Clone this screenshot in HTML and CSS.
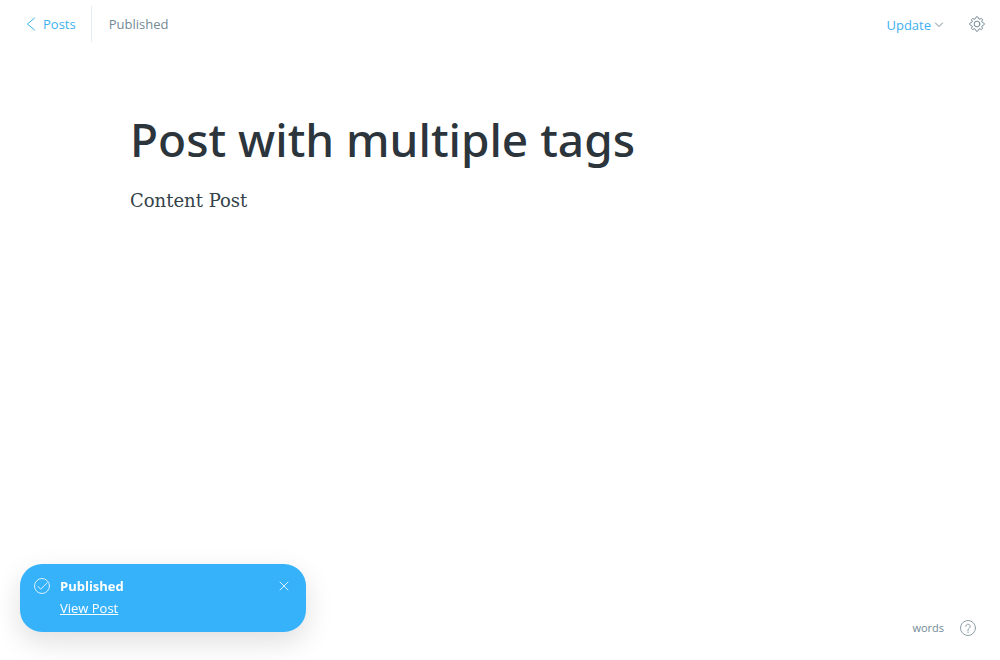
FILE: index.html
```html
<!DOCTYPE html>
<html lang="en">
<head>
<meta charset="utf-8">
<meta name="viewport" content="width=device-width, initial-scale=1">
<title>Post with multiple tags</title>
<link rel="stylesheet" href="styles.css">
</head>
<body>
<div class="editor">
  <header class="editor-header">
    <nav class="breadcrumb">
      <a class="back-link" href="#posts">
        <svg class="icon-back" viewBox="0 0 8 12" aria-hidden="true"><path d="M7.500 0 .5 6l7 6"/></svg>
        <span>Posts</span>
      </a>
      <span class="status">Published</span>
    </nav>
    <div class="actions">
      <button class="update-button" type="button">
        <span>Update</span>
        <svg class="icon-chevron" viewBox="0 0 8 6" aria-hidden="true"><path d="M.5 1 4 4.500 7.500 1"/></svg>
      </button>
      <button class="icon-button" type="button" aria-label="Settings">
        <svg class="icon-gear" viewBox="0 0 24 24" aria-hidden="true">
          <path d="M13.700 2.300a1.750 1.750 0 0 0-3.400 0l-.4 1.300a1.750 1.750 0 0 1-2.400 1l-1.200-.6a1.750 1.750 0 0 0-2.300 2.300l.6 1.200a1.750 1.750 0 0 1-1 2.400l-1.300.4a1.750 1.750 0 0 0 0 3.400l1.300.4a1.750 1.750 0 0 1 1 2.400L4 17.700A1.750 1.750 0 0 0 6.300 20l1.200-.6a1.750 1.750 0 0 1 2.400 1l.4 1.300a1.750 1.750 0 0 0 3.400 0l.4-1.300a1.750 1.750 0 0 1 2.400-1l1.200.6a1.750 1.750 0 0 0 2.300-2.300l-.6-1.200a1.750 1.750 0 0 1 1-2.400l1.300-.4a1.750 1.750 0 0 0 0-3.400l-1.300-.4a1.750 1.750 0 0 1-1-2.400l.6-1.200A1.750 1.750 0 0 0 17.700 4l-1.200.6a1.750 1.750 0 0 1-2.400-1z"/>
          <circle cx="12" cy="12" r="4.300"/>
        </svg>
      </button>
    </div>
  </header>

  <main class="canvas">
    <input class="post-title" type="text" aria-label="Post title" value="Post with multiple tags">
    <div class="post-body" contenteditable="true" spellcheck="false"><p>Content Post</p></div>
  </main>

  <footer class="editor-footer">
    <span class="word-count">words</span>
    <a class="help-link" href="#help" aria-label="Help">
      <svg class="icon-help" viewBox="0 0 16 16" aria-hidden="true"><circle cx="8" cy="8" r="7.500"/><path d="M5.800 6.400a2.200 2.200 0 1 1 3.300 1.900C8.300 8.800 8 9.100 8 10v.5M8 11.800v1"/></svg>
    </a>
  </footer>
</div>

<aside class="toast" role="status">
  <svg class="icon-check" viewBox="0 0 16 16" aria-hidden="true"><circle cx="8" cy="8" r="7.500"/><path d="m4 8.300 2.700 2.900 6.500-6.400"/></svg>
  <div class="toast-text">
    <strong class="toast-title">Published</strong>
    <a class="toast-link" href="#view">View Post</a>
  </div>
  <button class="toast-close" type="button" aria-label="Close">
    <svg class="icon-close" viewBox="0 0 8 8" aria-hidden="true"><path d="m0 0 8 8M8 0 0 8"/></svg>
  </button>
</aside>
</body>
</html>
```
FILE: styles.css
```css
* { box-sizing: border-box; }

body {
  margin: 0;
  background: #fff;
  color: #738a94;
  font: 13px/20px "Segoe UI", "Open Sans", "Noto Sans", sans-serif;
}

button {
  padding: 0;
  border: 0;
  background: none;
  color: inherit;
  font: inherit;
  cursor: pointer;
}

a { color: inherit; }

svg {
  display: block;
  flex: none;
  overflow: visible;
  fill: none;
  stroke: currentColor;
  stroke-linecap: round;
  stroke-linejoin: round;
}

.editor {
  display: flex;
  flex-direction: column;
  min-height: 100vh;
}

.editor-header {
  display: flex;
  align-items: center;
  justify-content: space-between;
  padding: 6px 15px 6px 27px;
}

.breadcrumb,
.actions,
.back-link,
.update-button {
  display: flex;
  align-items: center;
}

.back-link {
  gap: 8px;
  height: 36px;
  padding-right: 15px;
  border-right: 1px solid #e3edf3;
  color: #3eb0ef;
  text-decoration: none;
}

.status { padding-left: 17px; }

.actions { gap: 26px; }

.update-button {
  gap: 4px;
  padding-top: 2px;
  color: #3eb0ef;
}

.icon-back { width: 8px; height: 12px; }
.icon-chevron { width: 8px; height: 6px; color: #738a94; }
.icon-gear { width: 16px; height: 16px; stroke-width: 1.5; }

.canvas {
  flex: 1;
  padding: 59px 130px 0;
}

.post-title {
  display: block;
  width: 100%;
  padding: 0;
  border: 0;
  outline: 0;
  background: none;
  color: #2b353b;
  font: 500 46px/64px "Segoe UI", "Noto Sans", "Open Sans", sans-serif;
}

.post-body {
  padding-top: 14px;
  outline: 0;
  color: #34424a;
  font: 18px/32px Georgia, "DejaVu Serif", serif;
}

.post-body p { margin: 0; }

.editor-footer {
  display: flex;
  align-items: center;
  justify-content: flex-end;
  gap: 16px;
  padding: 0 24px 22px;
  font-size: 11px;
}

.icon-help { width: 16px; height: 16px; stroke-width: 1; opacity: .8; }

.toast {
  position: fixed;
  bottom: 28px;
  left: 20px;
  display: flex;
  align-items: flex-start;
  gap: 10px;
  width: 286px;
  padding: 11px 18px 13px 14px;
  border-radius: 22px;
  background: #36b2fa;
  box-shadow: 0 10px 28px rgba(0, 0, 0, .13);
  color: #fff;
}

.icon-check { width: 16px; height: 16px; margin-top: 3px; opacity: .8; }

.toast-text {
  display: flex;
  flex: 1;
  flex-direction: column;
  align-items: flex-start;
  line-height: 22px;
}

.toast-title { font-weight: 700; }

.toast-close { padding: 7px 0; }

.icon-close { width: 8px; height: 8px; opacity: .8; }
```
